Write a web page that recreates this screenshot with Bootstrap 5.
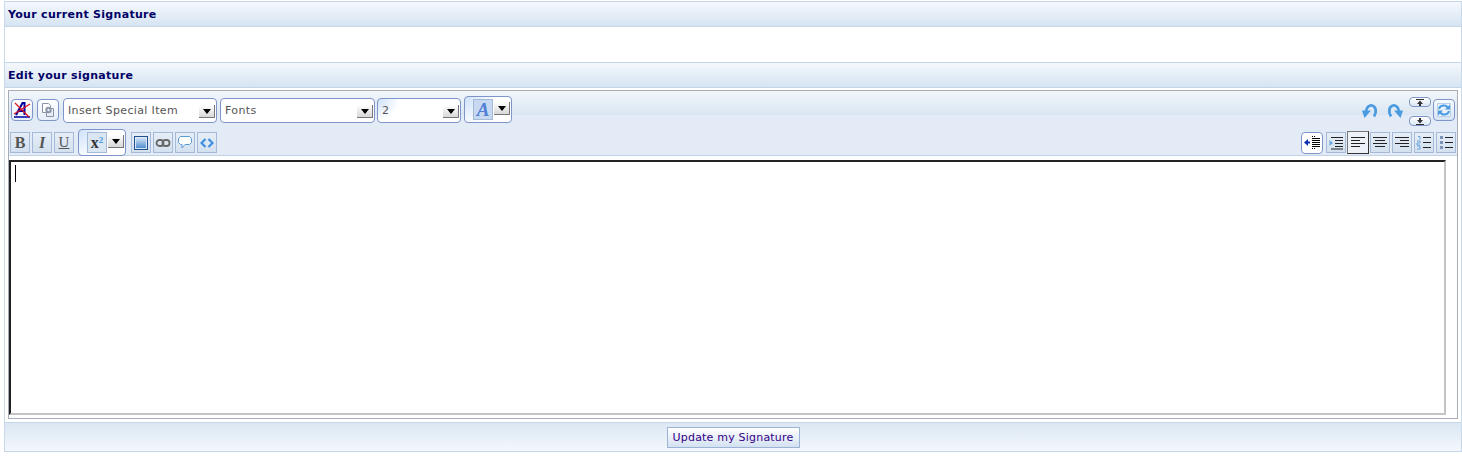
<!DOCTYPE html>
<html lang="en">
  <head>
    <meta charset="UTF-8" />
    <meta name="viewport" content="width=device-width, initial-scale=1.0" />
    <title>Edit Signature</title>
    <link href="https://cdn.jsdelivr.net/npm/bootstrap@5.3.0/dist/css/bootstrap.min.css" rel="stylesheet" />
    <style>
      body {
        background: #fff;
        font-family: "DejaVu Sans", Verdana, sans-serif;
        font-size: 11px;
        letter-spacing: 0.36px;
        color: #333;
      }
      .sig-page {
        margin: 1px 0 0 4px;
        width: 1458px;
        border-left: 1px solid #c8d9ea;
        border-right: 1px solid #c8d9ea;
      }
      .sig-head {
        height: 26px;
        padding: 3px 3px 0;
        border-top: 1px solid #c4d7ea;
        border-bottom: 1px solid #c4d7ea;
        background: linear-gradient(#f4f8fc, #d6e4f2);
        color: #000066;
        font-weight: 700;
        font-size: 11px;
        letter-spacing: 0.3px;
      }
      .sig-current {
        height: 35px;
      }
      .sig-editor {
        padding: 2px 3px 3px;
      }
      .ed-frame {
        border: 1px solid #a6adb6;
        height: 329px;
      }
      .ed-top {
        height: 40px;
        padding: 3px 2px 0 2px;
        background: linear-gradient(#f3f7fb, #d9e6f2 24px, #e3ebf6 24px);
      }
      .ed-bottom {
        height: 25px;
        background: #e3ebf6;
        padding: 0 1px 1px;
        border-bottom: 1px solid #c3d3e6;
      }
      .ed-tool {
        width: 22px;
        height: 22px;
        margin-top: 5px;
        border: 1px solid #7f95c9;
        border-radius: 4px;
        background: linear-gradient(#fff, #e6eef8);
        flex: none;
      }
      .ed-flat {
        width: 20px;
        height: 21px;
        border: 1px solid #a5bad7;
        background: linear-gradient(#e6eef7, #d3e0ef);
        color: #555;
        flex: none;
      }
      .ed-flat.is-on {
        border-color: #777 #333 #333 #777;
        background: #edf2f9;
        width: 22px;
        height: 23px;
      }
      .ed-flat.is-hot {
        width: 22px;
        height: 22px;
        border: 1px solid #7f95c9;
        border-radius: 4px;
        background: #fff;
      }
      .ed-letter {
        font-family: "Liberation Serif", serif;
        font-size: 16px;
        font-weight: 700;
        line-height: 1;
        letter-spacing: 0;
      }
      .ed-select {
        height: 25px;
        margin-top: 4px;
        border: 1px solid #7f95c9;
        border-radius: 4px;
        background: #fff;
        padding: 2px 1px 0 4px;
        color: #555;
        flex: none;
      }
      .ed-select-size {
        background: radial-gradient(circle at 0 0, #cfe2fa, #fff 22px);
      }
      .ed-arrow {
        width: 16px;
        height: 13px;
        border-right: 1px solid #777;
        border-bottom: 1px solid #777;
        background: linear-gradient(#fff, #d8d8d8);
        flex: none;
      }
      .ed-arrow::before {
        content: "";
        border: 4px solid transparent;
        border-top: 5px solid #000;
        border-bottom: 0;
      }
      .ed-group {
        width: 48px;
        height: 27px;
        border: 1px solid #7f95c9;
        border-radius: 4px;
        background: radial-gradient(circle at 0 0, #cfe2fa, #fff 30px);
        padding-left: 8px;
        flex: none;
      }
      .ed-group-box {
        width: 20px;
        height: 21px;
        border: 1px solid #a5bad7;
        background: #dbe6f3;
        flex: none;
      }
      .ed-group .ed-arrow {
        margin: 0 0 2px 1px;
      }
      .ed-hue {
        background: #c7d9f0;
      }
      .ed-hue span {
        color: #4f7fd6;
        font-size: 19px;
      }
      .ed-sup {
        color: #4a9be0;
        font-size: 9px;
      }
      .ed-under {
        font-family: "Liberation Serif", serif;
        font-size: 15px;
        letter-spacing: 0;
        text-decoration: underline;
      }
      .ed-step {
        width: 22px;
        height: 10px;
        border: 1px solid #7f95c9;
        border-radius: 4px;
        background: linear-gradient(#fff, #dbe7f4);
      }
      .ed-steps {
        height: 29px;
        margin: 3px 2px 0 5px;
      }
      .ed-undo {
        width: 17px;
        height: 16px;
        margin-top: 9px;
      }
      .ed-redo {
        margin-left: 9px;
      }
      .ed-tool-soft {
        background: linear-gradient(#f8fbff, #d6e4f5);
      }
      .ed-gap1 {
        margin-left: 1px;
      }
      .ed-gap2 {
        margin-left: 2px;
      }
      .ed-gap3 {
        margin-left: 3px;
      }
      .ed-group-x {
        margin: 0 5px 0 4px;
      }
      .ed-select-a {
        width: 154px;
      }
      .ed-select-b {
        width: 155px;
      }
      .ed-select-c {
        width: 84px;
      }
      .ed-group-a {
        margin: 2px 0 0 3px;
      }
      .ed-area {
        height: 255px;
        margin: 4px 11px 0 0;
        border-style: solid;
        border-width: 2px;
        border-color: #222 #c4c4c4 #c4c4c4 #222;
        background: #fff;
        padding: 3px 4px;
      }
      .ed-caret {
        width: 1px;
        height: 17px;
        background: #000;
      }
      .sig-foot {
        height: 30px;
        padding-top: 1px;
        border-top: 1px solid #c4d7ea;
        border-bottom: 1px solid #c4d7ea;
        background: linear-gradient(#dbe7f3, #f3f8fc);
      }
      .sig-submit {
        height: 21px;
        width: 133px;
        padding: 2px 0 0;
        border: 1px solid #9db3d3;
        background: linear-gradient(#fff, #d3e1f1);
        color: #330088;
        font-size: 11px;
        font-family: inherit;
        letter-spacing: 0.2px;
      }
      svg {
        display: block;
      }
    </style>
  </head>
  <body>
    <div class="sig-page">
      <div class="sig-head d-flex align-items-center">Your current Signature</div>
      <div class="sig-current"></div>
      <div class="sig-head d-flex align-items-center">Edit your signature</div>

      <div class="sig-editor">
        <div class="ed-frame">
          <div class="ed-top d-flex align-items-start">
            <div class="ed-tool d-flex align-items-center justify-content-center">
              <svg width="18" height="18" viewBox="0 0 18 18"><path d="M3 14 9.500 2h2v12" fill="none" stroke="#0000a0" stroke-width="2"/><path d="M6 10h6" stroke="#0000a0" stroke-width="2"/><path d="M1 16h16" stroke="#0000a0" stroke-width="1.500"/><path d="M2 2l14 14M17 3 1 13" stroke="#e01020" stroke-width="1.200"/></svg>
            </div>
            <div class="ed-tool d-flex align-items-center justify-content-center ms-1">
              <svg width="16" height="16" viewBox="0 0 16 16"><path d="M2.500 1.500h6l2 2v7h-8z" fill="#fff" stroke="#8a94a6"/><path d="M6.500 6.500h7v8h-7z" fill="#e8eef6" stroke="#8a94a6"/><circle cx="8.500" cy="8" r="3.200" fill="#8d95a8"/><circle cx="8.500" cy="8" r="1.200" fill="#e8eef6"/></svg>
            </div>
            <div class="ed-select ed-select-a d-flex align-items-center justify-content-between ms-1">
              <span>Insert Special Item</span><span class="ed-arrow d-flex align-items-center justify-content-center"></span>
            </div>
            <div class="ed-select ed-select-b d-flex align-items-center justify-content-between ed-gap3">
              <span>Fonts</span><span class="ed-arrow d-flex align-items-center justify-content-center"></span>
            </div>
            <div class="ed-select ed-select-c ed-select-size d-flex align-items-center justify-content-between ed-gap2">
              <span>2</span><span class="ed-arrow d-flex align-items-center justify-content-center"></span>
            </div>
            <div class="ed-group ed-group-a d-flex align-items-center">
              <div class="ed-group-box ed-hue d-flex align-items-center justify-content-center">
                <span class="ed-letter fst-italic">A</span>
              </div>
              <span class="ed-arrow d-flex align-items-center justify-content-center"></span>
            </div>

            <div class="ms-auto d-flex align-items-start">
              <svg class="ed-undo" viewBox="0 0 17 16"><path d="M5 9C5 4 8.500 2 11 2.500 15 3.500 16 9 13 13.500" fill="none" stroke="#4a9be0" stroke-width="2.800"/><path d="M1 7.500h9L3.500 15z" fill="#4a9be0"/></svg>
              <svg class="ed-undo ed-redo" viewBox="0 0 17 16"><path d="M12 9C12 4 8.500 2 6 2.500 2 3.500 1 9 4 13.500" fill="none" stroke="#4a9be0" stroke-width="2.800"/><path d="M16 7.500H7L13.500 15z" fill="#4a9be0"/></svg>
              <div class="ed-steps d-flex flex-column justify-content-between">
                <div class="ed-step d-flex align-items-center justify-content-center">
                  <svg width="10" height="7" viewBox="0 0 10 7"><path d="M1 .5h8" stroke="#333"/><path d="M5 1.500 8 5H2z" fill="#333"/><path d="M4 5h2v2H4z" fill="#333"/></svg>
                </div>
                <div class="ed-step d-flex align-items-center justify-content-center">
                  <svg width="10" height="7" viewBox="0 0 10 7"><path d="M1 6.500h8" stroke="#333"/><path d="M5 5.500 8 2H2z" fill="#333"/><path d="M4 0h2v2H4z" fill="#333"/></svg>
                </div>
              </div>
              <div class="ed-tool ed-tool-soft d-flex align-items-center justify-content-center">
                <svg width="18" height="18" viewBox="0 0 18 18"><path d="M2.500 2.500h13v13h-13z" fill="#e8f1fb" stroke="#b9cfe8"/><path d="M4 8c1-4 7-5 9-1" fill="none" stroke="#4a9be0" stroke-width="2"/><path d="M14 10c-1 4-7 5-9 1" fill="none" stroke="#4a9be0" stroke-width="2"/><path d="M15 3.500v5h-5zM3 14.500v-5h5z" fill="#4a9be0"/></svg>
              </div>
            </div>
          </div>

          <div class="ed-bottom d-flex align-items-center">
            <div class="ed-flat d-flex align-items-center justify-content-center ed-letter">B</div>
            <div class="ed-flat d-flex align-items-center justify-content-center ed-letter fst-italic ed-gap2">I</div>
            <div class="ed-flat d-flex align-items-center justify-content-center ed-under ed-gap2">U</div>
            <div class="ed-group ed-group-x d-flex align-items-center">
              <div class="ed-group-box d-flex align-items-center justify-content-center">
                <span class="ed-letter">x<sup class="ed-sup">2</sup></span>
              </div>
              <span class="ed-arrow d-flex align-items-center justify-content-center"></span>
            </div>
            <div class="ed-flat d-flex align-items-center justify-content-center">
              <svg width="14" height="14" viewBox="0 0 14 14"><defs><linearGradient id="imgFill" x1="0" y1="0" x2="0" y2="1"><stop offset="0" stop-color="#cfe0f2"/><stop offset="1" stop-color="#4f8fd0"/></linearGradient></defs><rect x=".5" y=".5" width="13" height="13" fill="none" stroke="#1f4f8f"/><rect x="2" y="2" width="10" height="10" fill="url(#imgFill)"/></svg>
            </div>
            <div class="ed-flat d-flex align-items-center justify-content-center ed-gap2">
              <svg width="16" height="10" viewBox="0 0 16 10"><rect x="1.500" y="2" width="7" height="6" rx="3" fill="none" stroke="#666" stroke-width="1.800"/><rect x="7.500" y="2" width="7" height="6" rx="3" fill="none" stroke="#666" stroke-width="1.800"/></svg>
            </div>
            <div class="ed-flat d-flex align-items-center justify-content-center ed-gap2">
              <svg width="16" height="15" viewBox="0 0 16 15"><path d="M3.500 1.500h9l2 2v4l-2 2H8l-3 3.500V9.500H3.500l-2-2v-4z" fill="#fff" stroke="#5b9bd8"/></svg>
            </div>
            <div class="ed-flat d-flex align-items-center justify-content-center ed-gap2">
              <svg width="14" height="10" viewBox="0 0 14 10"><path d="M5.500 1 1.500 5l4 4M8.500 1l4 4-4 4" fill="none" stroke="#3f8fe0" stroke-width="2.200"/></svg>
            </div>

            <div class="ms-auto d-flex align-items-center">
              <div class="ed-flat is-hot d-flex align-items-center justify-content-center">
                <svg width="18" height="16" viewBox="0 0 18 16"><path d="M9 1.500h1M9 13.500h1M11 1.500h1M11 13.500h1" stroke="#000"/><path d="M9 3.500h8M9 5.500h8M9 7.500h8M9 9.500h8M9 11.500h8" stroke="#000"/><path d="M1 7.500 5 4v7z" fill="#0b2fb0"/><path d="M4 6.500h3v2H4z" fill="#0b2fb0"/></svg>
              </div>
              <div class="ed-flat d-flex align-items-center justify-content-center ed-gap3">
                <svg width="16" height="14" viewBox="0 0 16 14"><path d="M3 1.500h12M7 4.500h8M7 7.500h8M7 10.500h8M3 13h12" stroke="#222"/><path d="M5 7 1.500 4v6z" fill="#6aa5e0"/></svg>
              </div>
              <div class="ed-flat is-on d-flex align-items-center justify-content-center ed-gap1">
                <svg width="16" height="13" viewBox="0 0 16 13"><path d="M1 1.500h14M1 4.500h9M1 7.500h14M1 10.500h9" stroke="#222"/></svg>
              </div>
              <div class="ed-flat d-flex align-items-center justify-content-center ed-gap1">
                <svg width="16" height="13" viewBox="0 0 16 13"><path d="M1 1.500h14M3 4.500h10M1 7.500h14M3 10.500h10" stroke="#222"/></svg>
              </div>
              <div class="ed-flat d-flex align-items-center justify-content-center ed-gap2">
                <svg width="16" height="13" viewBox="0 0 16 13"><path d="M1 1.500h14M6 4.500h9M1 7.500h14M6 10.500h9" stroke="#222"/></svg>
              </div>
              <div class="ed-flat d-flex align-items-center justify-content-center ed-gap2">
                <svg width="16" height="15" viewBox="0 0 16 15"><path d="M7 2.500h8M7 7.500h8M7 12.500h8" stroke="#222"/><path d="M2 1.500h2v3M1 6h3v2H1v2h3M1 11h3v3H1" fill="none" stroke="#6aa5e0"/></svg>
              </div>
              <div class="ed-flat d-flex align-items-center justify-content-center ed-gap2">
                <svg width="16" height="15" viewBox="0 0 16 15"><path d="M7 2.500h8M7 7.500h8M7 12.500h8" stroke="#222"/><path d="M2 1h3v3H2zM2 6h3v3H2zM2 11h3v3H2z" fill="#7c93b8"/></svg>
              </div>
            </div>
          </div>

          <div class="ed-area"><div class="ed-caret"></div></div>
        </div>
      </div>

      <div class="sig-foot d-flex align-items-center justify-content-center">
        <button type="button" class="sig-submit">Update my Signature</button>
      </div>
    </div>
    <script src="https://cdn.jsdelivr.net/npm/bootstrap@5.3.0/dist/js/bootstrap.bundle.min.js"></script>
  </body>
</html>
